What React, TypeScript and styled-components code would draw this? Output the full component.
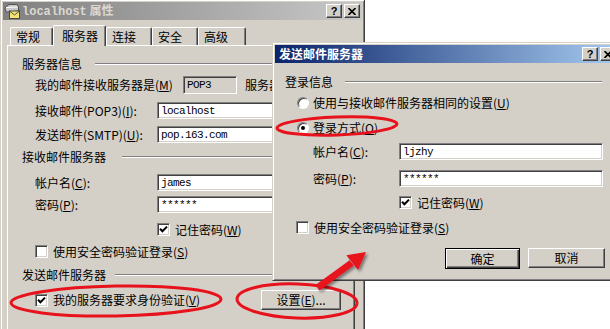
import React from "react";
import styled, { createGlobalStyle } from "styled-components";

const GlobalStyle = createGlobalStyle`
  html, body {
    margin: 0;
    padding: 0;
    background: #ffffff;
  }
  body {
    font-family: "Noto Sans CJK SC", "Liberation Sans", sans-serif;
    font-size: 12px;
    color: #000000;
  }
`;

const Screen = styled.div`
  position: relative;
  width: 610px;
  height: 329px;
  overflow: hidden;
  background: #ffffff;
`;

const Window = styled.div<{ $w: number; $h: number }>`
  width: ${(p) => p.$w}px;
  height: ${(p) => p.$h}px;
  box-sizing: border-box;
  background: #d4d0c8;
  border: 1px solid;
  border-color: #d4d0c8 #404040 #404040 #d4d0c8;
  box-shadow: inset 1px 1px #ffffff, inset -1px -1px #808080;
  padding: 2px;
  display: flex;
  flex-direction: column;
`;

const MainWindow = styled(Window)`
  margin-top: -1px;
`;

const SubWindow = styled(Window)`
  position: absolute;
  left: 272px;
  top: 42px;
  z-index: 2;
`;

const TitleBar = styled.div<{ $active: boolean }>`
  height: 18px;
  flex-shrink: 0;
  display: flex;
  align-items: center;
  padding: 0 2px 0 ${(p) => (p.$active ? 2 : 0)}px;
  background: ${(p) =>
    p.$active
      ? "linear-gradient(to right, #0a246a, #a6caf0)"
      : "linear-gradient(to right, #808080, #c8c8c8)"};
`;

const TitleText = styled.span<{ $active: boolean }>`
  font-weight: bold;
  font-size: 12px;
  line-height: 14px;
  color: ${(p) => (p.$active ? "#ffffff" : "#dcd8d0")};
  margin-left: 2px;
  white-space: nowrap;
`;

const MonoTitle = styled.span`
  font-family: "Liberation Mono", "Noto Sans CJK SC", monospace;
`;

const TitleButtons = styled.div`
  margin-left: auto;
  display: flex;
  gap: 2px;
`;

const TitleButton = styled.div`
  width: 16px;
  height: 14px;
  box-sizing: border-box;
  background: #d4d0c8;
  border: 1px solid;
  border-color: #ffffff #404040 #404040 #ffffff;
  box-shadow: inset -1px -1px #808080;
  display: flex;
  align-items: center;
  justify-content: center;
  font-family: "Liberation Sans", sans-serif;
  font-weight: bold;
  font-size: 11px;
  line-height: 11px;
`;

const TabStrip = styled.div`
  display: flex;
  align-items: flex-end;
  height: 20px;
  margin: 5px 7px 0 4px;
  padding-left: 3px;
  position: relative;
  z-index: 1;
`;

const Tab = styled.div<{ $w: number; $active?: boolean }>`
  width: ${(p) => p.$w}px;
  height: ${(p) => (p.$active ? 21 : 18)}px;
  margin-bottom: ${(p) => (p.$active ? -1 : 0)}px;
  box-sizing: border-box;
  padding: ${(p) => (p.$active ? "3px 0 0 8px" : "2px 0 0 5px")};
  background: #d4d0c8;
  border-top: 1px solid #ffffff;
  border-left: 1px solid #ffffff;
  border-right: 1px solid #404040;
  box-shadow: inset -1px 0 #808080;
  border-radius: 2px 2px 0 0;
  line-height: 14px;
  white-space: nowrap;
`;

const Panel = styled.div<{ $pl: number; $pr: number }>`
  flex: 1;
  display: flex;
  flex-direction: column;
  padding: 0 ${(p) => p.$pr}px 0 ${(p) => p.$pl}px;
`;

const TabPanel = styled(Panel)`
  margin: 0 7px 0 4px;
  border: 1px solid;
  border-color: #ffffff #404040 #404040 #ffffff;
  box-shadow: inset -1px -1px #808080;
`;

const Row = styled.div<{ $h: number; $mt: number; $indent?: number }>`
  display: flex;
  align-items: center;
  height: ${(p) => p.$h}px;
  margin-top: ${(p) => p.$mt}px;
  padding-left: ${(p) => p.$indent ?? 0}px;
  white-space: nowrap;
  line-height: 14px;
`;

const GroupLine = styled.div<{ $gap: number; $end?: number }>`
  flex: 1;
  height: 0;
  margin-left: ${(p) => p.$gap}px;
  margin-right: ${(p) => p.$end ?? 0}px;
  border-top: 1px solid #808080;
  border-bottom: 1px solid #ffffff;
`;

const Label = styled.span<{ $w?: number }>`
  display: inline-block;
  width: ${(p) => (p.$w ? `${p.$w}px` : "auto")};
  flex-shrink: 0;
`;

const ClippedLabel = styled.span<{ $w: number; $ml: number }>`
  display: inline-block;
  width: ${(p) => p.$w}px;
  margin-left: ${(p) => p.$ml}px;
  overflow: hidden;
  flex-shrink: 0;
`;

const U = styled.span`
  text-decoration: underline;
  text-underline-offset: 1px;
`;

const Field = styled.div<{ $w: number; $h?: number; $grey?: boolean }>`
  width: ${(p) => p.$w}px;
  height: ${(p) => p.$h ?? 17}px;
  flex-shrink: 0;
  box-sizing: border-box;
  background: ${(p) => (p.$grey ? "#d4d0c8" : "#ffffff")};
  border: 1px solid;
  border-color: #808080 #ffffff #ffffff #808080;
  box-shadow: inset 1px 1px #404040, inset -1px -1px #d4d0c8;
  padding-left: 3px;
  display: flex;
  align-items: center;
  font-family: "Liberation Mono", monospace;
  font-size: 11px;
  letter-spacing: -0.6px;
`;

const Box = styled.div`
  width: 13px;
  height: 13px;
  flex-shrink: 0;
  box-sizing: border-box;
  background: #ffffff;
  border: 1px solid;
  border-color: #808080 #ffffff #ffffff #808080;
  box-shadow: inset 1px 1px #404040, inset -1px -1px #d4d0c8;
  display: flex;
  align-items: center;
  justify-content: center;
  margin-right: 5px;
`;

const Radio = styled.div<{ $on?: boolean }>`
  width: 12px;
  height: 12px;
  flex-shrink: 0;
  box-sizing: border-box;
  border-radius: 50%;
  background: #ffffff;
  border: 1px solid;
  border-color: #808080 #ffffff #ffffff #808080;
  box-shadow: inset 1px 1px #404040;
  margin-right: 4px;
  display: flex;
  align-items: center;
  justify-content: center;

  &::after {
    content: "";
    display: ${(p) => (p.$on ? "block" : "none")};
    width: 4px;
    height: 4px;
    border-radius: 50%;
    background: #000000;
  }
`;

const Button = styled.div<{ $w: number; $default?: boolean }>`
  width: ${(p) => p.$w}px;
  height: ${(p) => (p.$default ? 21 : 20)}px;
  box-sizing: border-box;
  flex-shrink: 0;
  background: #d4d0c8;
  border: 1px solid;
  border-color: ${(p) =>
    p.$default ? "#000000" : "#ffffff #404040 #404040 #ffffff"};
  box-shadow: ${(p) =>
    p.$default
      ? "inset 1px 1px #ffffff, inset -1px -1px #404040, inset -2px -2px #808080"
      : "inset -1px -1px #808080"};
  display: flex;
  align-items: center;
  justify-content: center;
  line-height: 14px;
`;

const Buttons = styled.div`
  display: flex;
  justify-content: flex-end;
  gap: 8px;
  margin-top: 13px;
`;

const PushRight = styled.div`
  margin-left: auto;
`;

const Annotation = styled.svg`
  position: absolute;
  left: 0;
  top: 0;
  width: 610px;
  height: 329px;
  pointer-events: none;
  z-index: 5;
`;

const Check = () => (
  <svg width="9" height="9" viewBox="0 0 9 9">
    <polyline points="1,3.8 3.4,6.3 8,1.6" fill="none" stroke="#000" strokeWidth="2" />
  </svg>
);

const CheckBox = ({ on }: { on?: boolean }) => <Box>{on && <Check />}</Box>;

const MailIcon = () => (
  <svg width="17" height="16" viewBox="0 0 17 16">
    <path d="M2 5 L6 1.5 L14 1.5 L15.5 4 L15.5 8 L3 9 Z" fill="#c8c8c8" stroke="#404040" strokeWidth="0.8" />
    <path d="M3 4.5 L14.5 4" stroke="#ffffff" strokeWidth="1" />
    <rect x="6.5" y="8" width="10" height="7.5" fill="#f4e27a" stroke="#303030" strokeWidth="0.8" />
    <path d="M6.5 8 L11.5 12 L16.5 8" fill="none" stroke="#303030" strokeWidth="0.8" />
  </svg>
);

const CloseGlyph = () => (
  <svg width="8" height="7" viewBox="0 0 8 7">
    <path d="M0.5 0 L7.5 7 M7.5 0 L0.5 7" stroke="#000" strokeWidth="1.6" />
  </svg>
);

const WindowButtons = () => (
  <TitleButtons>
    <TitleButton>?</TitleButton>
    <TitleButton>
      <CloseGlyph />
    </TitleButton>
  </TitleButtons>
);

export default function App() {
  return (
    <>
      <GlobalStyle />
      <Screen>
        <MainWindow $w={365} $h={345}>
          <TitleBar $active={false}>
            <MailIcon />
            <TitleText $active={false}>
              <MonoTitle>localhost</MonoTitle> 属性
            </TitleText>
            <WindowButtons />
          </TitleBar>
          <TabStrip>
            <Tab $w={43}>常规</Tab>
            <Tab $w={53} $active>
              服务器
            </Tab>
            <Tab $w={46}>连接</Tab>
            <Tab $w={46}>安全</Tab>
            <Tab $w={48}>高级</Tab>
          </TabStrip>
          <TabPanel $pl={14} $pr={13}>
            <Row $h={14} $mt={11}>
              <Label>服务器信息</Label>
              <GroupLine $gap={13} />
            </Row>
            <Row $h={18} $mt={5} $indent={13}>
              <Label $w={148}>
                我的邮件接收服务器是(<U>M</U>)
              </Label>
              <Field $w={54} $h={18} $grey>
                POP3
              </Field>
              <ClippedLabel $w={27} $ml={8}>
                服务器
              </ClippedLabel>
            </Row>
            <Row $h={17} $mt={8} $indent={13}>
              <Label $w={122}>
                接收邮件(POP3)(<U>I</U>):
              </Label>
              <Field $w={200}>localhost</Field>
            </Row>
            <Row $h={17} $mt={7} $indent={13}>
              <Label $w={122}>
                发送邮件(SMTP)(<U>U</U>):
              </Label>
              <Field $w={200}>pop.163.com</Field>
            </Row>
            <Row $h={14} $mt={7}>
              <Label>接收邮件服务器</Label>
              <GroupLine $gap={16} />
            </Row>
            <Row $h={17} $mt={10} $indent={13}>
              <Label $w={122}>
                帐户名(<U>C</U>):
              </Label>
              <Field $w={200}>james</Field>
            </Row>
            <Row $h={17} $mt={5} $indent={13}>
              <Label $w={122}>
                密码(<U>P</U>):
              </Label>
              <Field $w={200}>******</Field>
            </Row>
            <Row $h={15} $mt={9} $indent={135}>
              <CheckBox on />
              <Label>
                记住密码(<U>W</U>)
              </Label>
            </Row>
            <Row $h={15} $mt={7} $indent={13}>
              <CheckBox />
              <Label>
                使用安全密码验证登录(<U>S</U>)
              </Label>
            </Row>
            <Row $h={14} $mt={9}>
              <Label>发送邮件服务器</Label>
              <GroupLine $gap={9} />
            </Row>
            <Row $h={20} $mt={8} $indent={13}>
              <CheckBox on />
              <Label>
                我的服务器要求身份验证(<U>V</U>)
              </Label>
              <PushRight>
                <Button $w={80}>
                  设置(<U>E</U>)...
                </Button>
              </PushRight>
            </Row>
          </TabPanel>
        </MainWindow>

        <SubWindow $w={349} $h={239}>
          <TitleBar $active>
            <TitleText $active>发送邮件服务器</TitleText>
            <WindowButtons />
          </TitleBar>
          <Panel $pl={10} $pr={13}>
            <Row $h={14} $mt={12}>
              <Label>登录信息</Label>
              <GroupLine $gap={12} $end={3} />
            </Row>
            <Row $h={16} $mt={6} $indent={12}>
              <Radio />
              <Label>
                使用与接收邮件服务器相同的设置(<U>U</U>)
              </Label>
            </Row>
            <Row $h={16} $mt={9} $indent={12}>
              <Radio $on />
              <Label>
                登录方式(<U>O</U>)
              </Label>
            </Row>
            <Row $h={17} $mt={7} $indent={28}>
              <Label $w={86}>
                帐户名(<U>C</U>):
              </Label>
              <Field $w={204}>ljzhy</Field>
            </Row>
            <Row $h={17} $mt={10} $indent={28}>
              <Label $w={86}>
                密码(<U>P</U>):
              </Label>
              <Field $w={204}>******</Field>
            </Row>
            <Row $h={15} $mt={8} $indent={114}>
              <CheckBox on />
              <Label>
                记住密码(<U>W</U>)
              </Label>
            </Row>
            <Row $h={15} $mt={10} $indent={11}>
              <CheckBox />
              <Label>
                使用安全密码验证登录(<U>S</U>)
              </Label>
            </Row>
            <Buttons>
              <Button $w={75} $default>
                确定
              </Button>
              <Button $w={77}>取消</Button>
            </Buttons>
          </Panel>
        </SubWindow>

        <Annotation viewBox="0 0 610 329">
          <defs>
            <filter id="shadow" x="-20%" y="-20%" width="140%" height="140%">
              <feDropShadow dx="2" dy="2" stdDeviation="1.5" floodColor="#000" floodOpacity="0.45" />
            </filter>
          </defs>
          <g fill="none" stroke="#e8121c" strokeWidth="3">
            <ellipse cx="116" cy="301" rx="105" ry="15" transform="rotate(-1 116 301)" />
            <ellipse cx="297" cy="301" rx="60" ry="17" transform="rotate(2 297 301)" />
            <ellipse cx="337" cy="126" rx="60" ry="9" transform="rotate(-2 337 126)" />
          </g>
          <g fill="#e8121c" filter="url(#shadow)">
            <path d="M315.5 285 L319.5 290.5 L353.6 265.6 L349.6 260.2 Z" />
            <path d="M366 252 L358 270 L346.4 255.2 Z" />
          </g>
        </Annotation>
      </Screen>
    </>
  );
}
